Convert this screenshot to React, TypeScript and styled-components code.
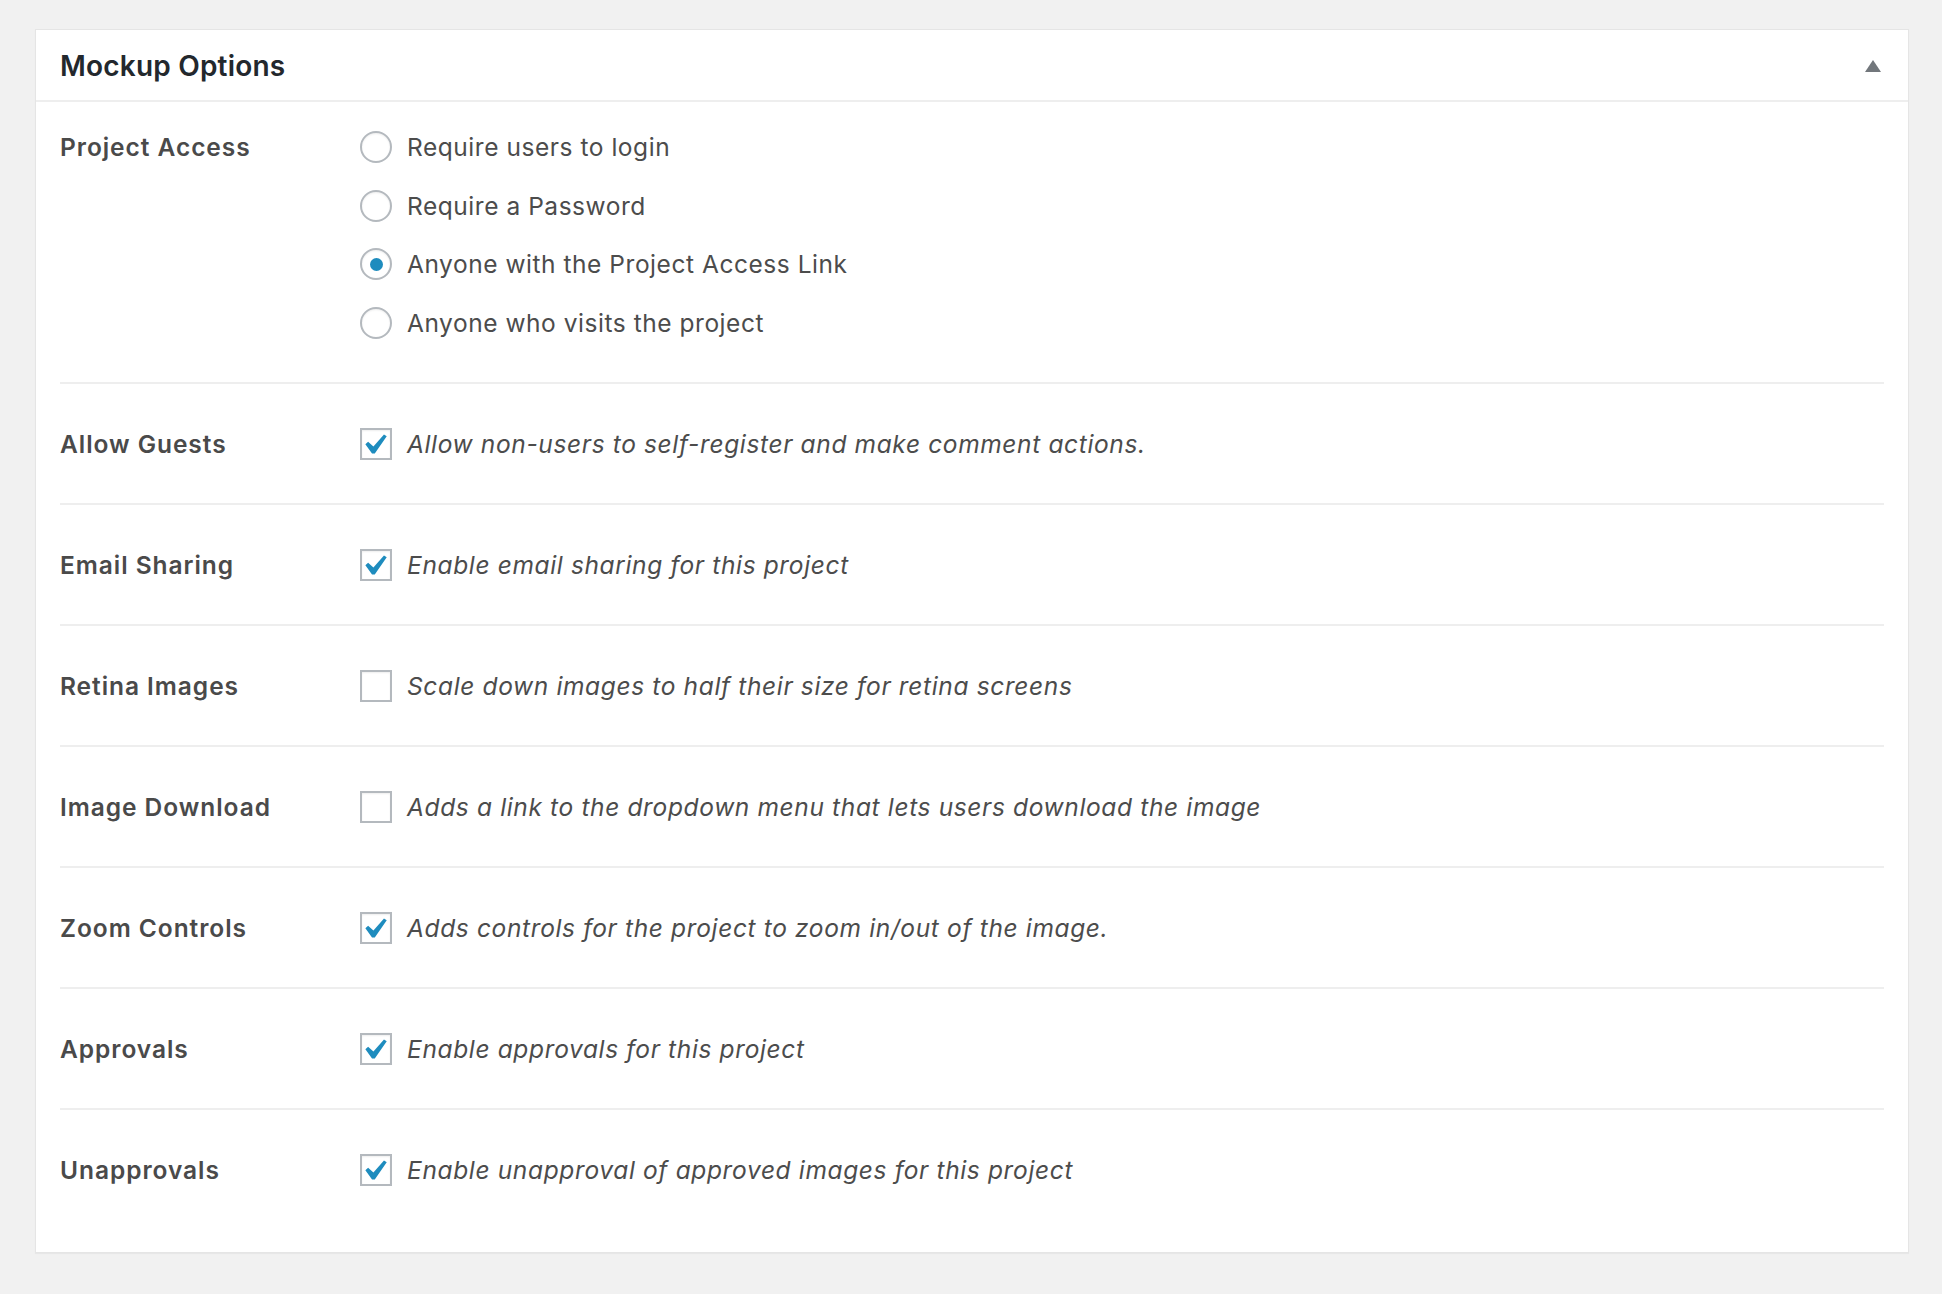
import React from "react";
import styled, { createGlobalStyle } from "styled-components";

const GlobalStyle = createGlobalStyle`
  html, body { margin: 0; padding: 0; }
  body {
    background: #f1f1f1;
    font-family: Inter, "Noto Sans", "Liberation Sans", sans-serif;
    color: #444;
  }
`;

const Page = styled.div`
  padding: 29px 33px 40px 35px;
`;

const Panel = styled.section`
  background: #fff;
  border: 1px solid #e5e5e5;
  box-shadow: 0 1px 1px rgba(0, 0, 0, 0.04);
`;

const Header = styled.header`
  box-sizing: border-box;
  display: flex;
  align-items: center;
  justify-content: space-between;
  height: 72px;
  padding: 2px 27px 0 24px;
  border-bottom: 2px solid #eeeeee;
`;

const Title = styled.h2`
  margin: 0;
  font-size: 28px;
  font-weight: 600;
  color: #23282d;
  letter-spacing: 0.2px;
`;

const Toggle = styled.button`
  display: flex;
  align-items: center;
  justify-content: center;
  width: 16px;
  height: 12px;
  padding: 0;
  border: 0;
  background: none;
  cursor: pointer;
`;

const Body = styled.div`
  padding: 0 24px 23px;
`;

const Row = styled.div<{ $first?: boolean; $last?: boolean }>`
  display: grid;
  grid-template-columns: 300px 1fr;
  align-items: start;
  padding: ${(p) => (p.$first ? "29px 0 43px" : "44px 0 43px")};
  border-bottom: ${(p) => (p.$last ? "none" : "2px solid #eeeeee")};
`;

const Label = styled.div`
  font-size: 24.5px;
  line-height: 32px;
  font-weight: 600;
  letter-spacing: 0.95px;
  color: #4a4a4a;
`;

const RadioList = styled.div`
  display: flex;
  flex-direction: column;
  gap: 26.5px;
`;

const Option = styled.label`
  display: flex;
  align-items: center;
  gap: 15px;
  font-size: 24.5px;
  line-height: 32px;
  letter-spacing: 0.54px;
  color: #4c4c4c;
  cursor: pointer;
`;

const RadioCircle = styled.span<{ $on?: boolean }>`
  box-sizing: border-box;
  flex: none;
  display: flex;
  align-items: center;
  justify-content: center;
  width: 32px;
  height: 32px;
  border-radius: 50%;
  border: 2px solid #b4b9be;
  background: #fff;
  box-shadow: inset 0 1px 2px rgba(0, 0, 0, 0.07);
  &::after {
    content: "";
    display: ${(p) => (p.$on ? "block" : "none")};
    width: 13px;
    height: 13px;
    border-radius: 50%;
    background: #1e8cbe;
  }
`;

const CheckBox = styled.span`
  box-sizing: border-box;
  flex: none;
  display: flex;
  align-items: center;
  justify-content: center;
  width: 32px;
  height: 32px;
  border: 2px solid #b4b9be;
  background: #fff;
  box-shadow: inset 0 1px 2px rgba(0, 0, 0, 0.07);
`;

const Desc = styled.span`
  font-style: italic;
  letter-spacing: 0.64px;
  color: #4c4c4c;
`;

const Check = () => (
  <svg width="22" height="20" viewBox="5.6 4.8 10.7 9.5" aria-hidden="true">
    <path d="M14.83 4.89l1.34.94-5.81 8.38H9.02L5.78 9.67l1.34-1.25 2.57 2.4z" fill="#1e8cbe" />
  </svg>
);

const radios = [
  { text: "Require users to login", on: false },
  { text: "Require a Password", on: false },
  { text: "Anyone with the Project Access Link", on: true },
  { text: "Anyone who visits the project", on: false },
];

const checks = [
  { label: "Allow Guests", text: "Allow non-users to self-register and make comment actions.", on: true },
  { label: "Email Sharing", text: "Enable email sharing for this project", on: true },
  { label: "Retina Images", text: "Scale down images to half their size for retina screens", on: false },
  { label: "Image Download", text: "Adds a link to the dropdown menu that lets users download the image", on: false },
  { label: "Zoom Controls", text: "Adds controls for the project to zoom in/out of the image.", on: true },
  { label: "Approvals", text: "Enable approvals for this project", on: true },
  { label: "Unapprovals", text: "Enable unapproval of approved images for this project", on: true },
];

export default function App() {
  return (
    <>
      <GlobalStyle />
      <Page>
        <Panel>
          <Header>
            <Title>Mockup Options</Title>
            <Toggle aria-label="Toggle panel">
              <svg width="16" height="12" viewBox="0 0 16 12">
                <path d="M8 0L16 12H0z" fill="#72777c" />
              </svg>
            </Toggle>
          </Header>
          <Body>
            <Row $first>
              <Label>Project Access</Label>
              <RadioList>
                {radios.map((r) => (
                  <Option key={r.text}>
                    <RadioCircle $on={r.on} />
                    <span>{r.text}</span>
                  </Option>
                ))}
              </RadioList>
            </Row>
            {checks.map((c, i) => (
              <Row key={c.label} $last={i === checks.length - 1}>
                <Label>{c.label}</Label>
                <Option>
                  <CheckBox>{c.on && <Check />}</CheckBox>
                  <Desc>{c.text}</Desc>
                </Option>
              </Row>
            ))}
          </Body>
        </Panel>
      </Page>
    </>
  );
}
